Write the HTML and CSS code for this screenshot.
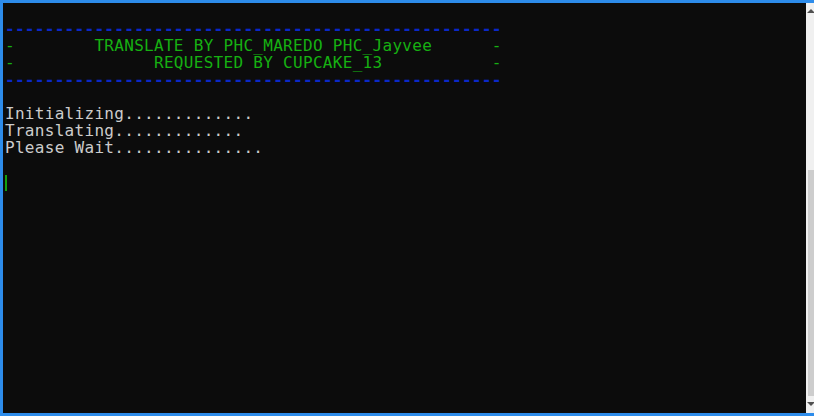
FILE: index.html
```html
<!DOCTYPE html>
<html>
<head>
<meta charset="utf-8">
<link rel="stylesheet" href="styles.css">
</head>
<body>
<div class="window">
  <div class="console">
    <div class="line"> </div>
    <div class="line blue">--------------------------------------------------</div>
    <div class="line green">-        TRANSLATE BY PHC_MAREDO PHC_Jayvee      -</div>
    <div class="line green">-              REQUESTED BY CUPCAKE_13           -</div>
    <div class="line blue">--------------------------------------------------</div>
    <div class="line"> </div>
    <div class="line">Initializing.............</div>
    <div class="line">Translating.............</div>
    <div class="line">Please Wait...............</div>
    <div class="line"> </div>
    <div class="line"><span class="cursor"></span></div>
  </div>
  <div class="scrollbar">
    <div class="arrow up"></div>
    <div class="track"></div>
    <div class="thumb"></div>
    <div class="arrow down"></div>
  </div>
</div>
</body>
</html>
```
FILE: styles.css
```css
html, body {
  margin: 0;
  padding: 0;
  background: #0c0c0c;
}
.window {
  width: 814px;
  height: 416px;
  box-sizing: border-box;
  border-top: 3px solid #2d8ceb;
  border-left: 3px solid #2d8ceb;
  border-bottom: 3px solid #2d8ceb;
  display: flex;
  overflow: hidden;
}
.console {
  flex: 1;
  background: #0c0c0c;
  padding-left: 2px;
  font-family: "DejaVu Sans Mono", "Liberation Mono", monospace;
  font-size: 16px;
  letter-spacing: 0.3px;
  line-height: 17px;
  color: #cccccc;
}
.line {
  height: 17px;
  white-space: pre;
}
.blue { color: #0a28c8; font-weight: bold; }
.green { color: #16b012; }
.cursor {
  display: inline-block;
  width: 2px;
  height: 16px;
  background: #13a10e;
  vertical-align: top;
  margin-top: 2px;
}
.scrollbar {
  width: 8px;
  background: #f0f0f0;
  display: flex;
  flex-direction: column;
}
.arrow {
  height: 17px;
  position: relative;
}
.arrow.up::after {
  content: "";
  position: absolute;
  left: 1px;
  top: 6px;
  border-left: 4px solid transparent;
  border-right: 4px solid transparent;
  border-bottom: 4px solid #505050;
}
.arrow.down::after {
  content: "";
  position: absolute;
  left: 1px;
  top: 6px;
  border-left: 4px solid transparent;
  border-right: 4px solid transparent;
  border-top: 4px solid #505050;
}
.track {
  height: 150px;
}
.thumb {
  flex: 1;
  background: #cdcdcd;
  margin-left: 2px;
}
```
